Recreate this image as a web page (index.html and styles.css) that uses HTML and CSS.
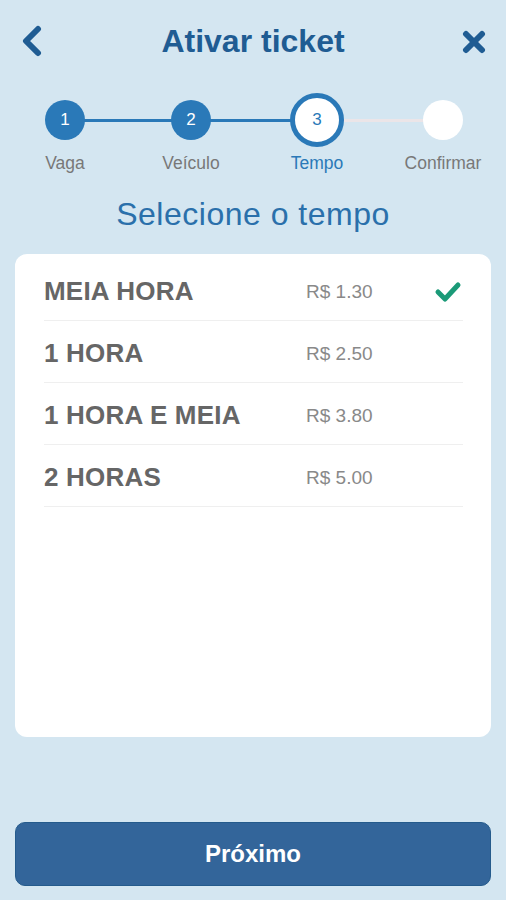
FILE: index.html
```html
<!DOCTYPE html>
<html lang="pt">
<head>
    <meta charset="UTF-8">
    <meta name="viewport" content="width=device-width, initial-scale=1.0">
    <title>Ativar ticket</title>
    <link rel="stylesheet" href="styles.css">
</head>
<body>
<!-- Cabeçalho -->
<header class="topbar">
    <button class="icon-btn back" aria-label="Voltar">
        <svg width="22" height="32" viewBox="0 0 22 32">
            <polyline points="18,4 6,16 18,28" fill="none" stroke="#1f5c93" stroke-width="6" stroke-linecap="round" stroke-linejoin="round"/>
        </svg>
    </button>
    <h1 class="title">Ativar ticket</h1>
    <button class="icon-btn close" aria-label="Fechar">
        <svg width="24" height="24" viewBox="0 0 24 24">
            <line x1="4" y1="4" x2="20" y2="20" stroke="#1f5c93" stroke-width="6" stroke-linecap="round"/>
            <line x1="20" y1="4" x2="4" y2="20" stroke="#1f5c93" stroke-width="6" stroke-linecap="round"/>
        </svg>
    </button>
</header>

<!-- Passos -->
<ol class="stepper">
    <li class="step done">
        <div class="dot-wrap"><span class="dot">1</span></div>
        <span class="step-label">Vaga</span>
    </li>
    <li class="step done">
        <div class="dot-wrap"><span class="dot">2</span></div>
        <span class="step-label">Veículo</span>
    </li>
    <li class="step current">
        <div class="dot-wrap"><span class="dot">3</span></div>
        <span class="step-label">Tempo</span>
    </li>
    <li class="step">
        <div class="dot-wrap"><span class="dot"></span></div>
        <span class="step-label">Confirmar</span>
    </li>
</ol>

<h2 class="subtitle">Selecione o tempo</h2>

<!-- Lista de tempos -->
<section class="card">
    <div class="option selected">
        <span class="option-name">MEIA HORA</span>
        <span class="option-price">R$ 1.30</span>
        <svg class="check" width="28" height="22" viewBox="0 0 28 22">
            <polyline points="4,11 11,18 24,4" fill="none" stroke="#1b9a78" stroke-width="5" stroke-linecap="round" stroke-linejoin="round"/>
        </svg>
    </div>
    <div class="option">
        <span class="option-name">1 HORA</span>
        <span class="option-price">R$ 2.50</span>
    </div>
    <div class="option">
        <span class="option-name">1 HORA E MEIA</span>
        <span class="option-price">R$ 3.80</span>
    </div>
    <div class="option">
        <span class="option-name">2 HORAS</span>
        <span class="option-price">R$ 5.00</span>
    </div>
</section>

<button class="next-btn">Próximo</button>
</body>
</html>
```

FILE: styles.css
```css
* {
    box-sizing: border-box;
}

body {
    margin: 0;
    padding: 0 15px 14px;
    height: 900px;
    display: flex;
    flex-direction: column;
    font-family: 'Liberation Sans', Arial, sans-serif;
    background-color: #d4e6f1;
}

/* Cabeçalho */
.topbar {
    display: grid;
    grid-template-columns: 1fr auto 1fr;
    align-items: center;
    margin: 21px -15px 0;
    padding: 0 20px 0 20px;
    height: 40px;
}

.icon-btn {
    padding: 0;
    border: 0;
    background: none;
    display: flex;
}

.back {
    justify-self: start;
}

.close {
    justify-self: end;
    margin-top: 2px;
}

.title {
    margin: 0;
    font-size: 32px;
    line-height: 40px;
    font-weight: 700;
    color: #1f5c93;
}

/* Passos */
.stepper {
    list-style: none;
    margin: 32px -15px 0;
    padding: 0 0 0 2px;
    display: grid;
    grid-template-columns: repeat(4, 1fr);
}

.step {
    position: relative;
    display: flex;
    flex-direction: column;
    align-items: center;
}

/* Linha entre os passos */
.step:not(:last-child)::after {
    content: "";
    position: absolute;
    top: 26px;
    left: 50%;
    width: 100%;
    height: 3px;
    background-color: #ebe5e8;
}

.step.done::after {
    background-color: #2a79b8 !important;
}

.dot-wrap {
    position: relative;
    z-index: 1;
    height: 54px;
    display: flex;
    align-items: center;
    justify-content: center;
}

.dot {
    width: 40px;
    height: 40px;
    border-radius: 50%;
    background-color: #fff;
    display: flex;
    align-items: center;
    justify-content: center;
    font-size: 17px;
    color: #fff;
}

.done .dot {
    background-color: #2a79b8;
}

.current .dot {
    width: 54px;
    height: 54px;
    border: 5px solid #2a79b8;
    color: #2a79b8;
}

.step-label {
    margin-top: 5px;
    font-size: 17.5px;
    line-height: 22px;
    color: #787878;
}

.current .step-label {
    color: #2a79b8;
}

.subtitle {
    margin: 20px 0 0;
    text-align: center;
    font-size: 32px;
    line-height: 40px;
    font-weight: 400;
    letter-spacing: 0.5px;
    color: #2a70ab;
}

/* Cartão */
.card {
    flex: 1;
    margin-top: 20px;
    padding: 5px 28px 0 29px;
    background-color: #fff;
    border-radius: 12px;
}

.option {
    display: grid;
    grid-template-columns: 262px 1fr auto;
    align-items: center;
    height: 62px;
    padding-top: 4px;
    border-bottom: 1px solid #efefef;
}

.option-name {
    font-size: 26px;
    font-weight: 700;
    letter-spacing: 0.2px;
    color: #666;
}

.option-price {
    font-size: 19px;
    color: #898989;
}

.check {
    margin-right: 1px;
}

/* Botão */
.next-btn {
    margin-top: 85px;
    height: 64px;
    border: 1px solid #255b8c;
    border-radius: 10px;
    background-color: #33659a;
    color: #fff;
    font-family: inherit;
    font-size: 24px;
    font-weight: 700;
}
```
